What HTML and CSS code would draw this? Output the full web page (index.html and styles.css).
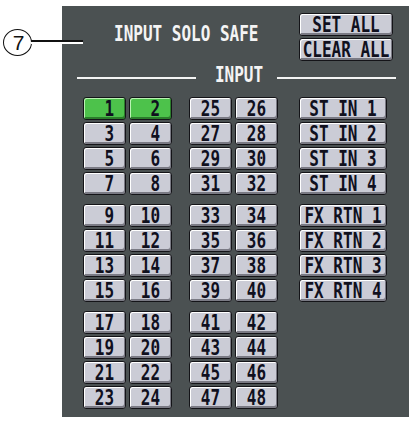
FILE: index.html
```html
<!DOCTYPE html>
<html lang="en">
<head>
<meta charset="utf-8">
<title>Input Solo Safe</title>
<link rel="stylesheet" href="styles.css">
</head>
<body>
<div class="page">
  <div class="callout"><span class="callout-num">7</span></div>
  <div class="leader"></div>

  <section class="panel">
    <header class="head">
      <h1 class="title"><span class="lcd">INPUT SOLO SAFE</span></h1>
      <div class="actions">
        <button type="button" class="btn"><span class="lcd">SET ALL</span></button>
        <button type="button" class="btn"><span class="lcd">CLEAR ALL</span></button>
      </div>
    </header>

    <div class="divider">
      <span class="rule"></span>
      <span class="lcd divider-label">INPUT</span>
      <span class="rule"></span>
    </div>

    <div class="matrix">
      <div class="bank">
        <div class="group">
          <button type="button" class="btn on"><span class="lcd num">1</span></button>
          <button type="button" class="btn on"><span class="lcd num">2</span></button>
          <button type="button" class="btn"><span class="lcd num">3</span></button>
          <button type="button" class="btn"><span class="lcd num">4</span></button>
          <button type="button" class="btn"><span class="lcd num">5</span></button>
          <button type="button" class="btn"><span class="lcd num">6</span></button>
          <button type="button" class="btn"><span class="lcd num">7</span></button>
          <button type="button" class="btn"><span class="lcd num">8</span></button>
        </div>
        <div class="group">
          <button type="button" class="btn"><span class="lcd num">9</span></button>
          <button type="button" class="btn"><span class="lcd num">10</span></button>
          <button type="button" class="btn"><span class="lcd num">11</span></button>
          <button type="button" class="btn"><span class="lcd num">12</span></button>
          <button type="button" class="btn"><span class="lcd num">13</span></button>
          <button type="button" class="btn"><span class="lcd num">14</span></button>
          <button type="button" class="btn"><span class="lcd num">15</span></button>
          <button type="button" class="btn"><span class="lcd num">16</span></button>
        </div>
        <div class="group">
          <button type="button" class="btn"><span class="lcd num">17</span></button>
          <button type="button" class="btn"><span class="lcd num">18</span></button>
          <button type="button" class="btn"><span class="lcd num">19</span></button>
          <button type="button" class="btn"><span class="lcd num">20</span></button>
          <button type="button" class="btn"><span class="lcd num">21</span></button>
          <button type="button" class="btn"><span class="lcd num">22</span></button>
          <button type="button" class="btn"><span class="lcd num">23</span></button>
          <button type="button" class="btn"><span class="lcd num">24</span></button>
        </div>
      </div>

      <div class="bank">
        <div class="group">
          <button type="button" class="btn"><span class="lcd num">25</span></button>
          <button type="button" class="btn"><span class="lcd num">26</span></button>
          <button type="button" class="btn"><span class="lcd num">27</span></button>
          <button type="button" class="btn"><span class="lcd num">28</span></button>
          <button type="button" class="btn"><span class="lcd num">29</span></button>
          <button type="button" class="btn"><span class="lcd num">30</span></button>
          <button type="button" class="btn"><span class="lcd num">31</span></button>
          <button type="button" class="btn"><span class="lcd num">32</span></button>
        </div>
        <div class="group">
          <button type="button" class="btn"><span class="lcd num">33</span></button>
          <button type="button" class="btn"><span class="lcd num">34</span></button>
          <button type="button" class="btn"><span class="lcd num">35</span></button>
          <button type="button" class="btn"><span class="lcd num">36</span></button>
          <button type="button" class="btn"><span class="lcd num">37</span></button>
          <button type="button" class="btn"><span class="lcd num">38</span></button>
          <button type="button" class="btn"><span class="lcd num">39</span></button>
          <button type="button" class="btn"><span class="lcd num">40</span></button>
        </div>
        <div class="group">
          <button type="button" class="btn"><span class="lcd num">41</span></button>
          <button type="button" class="btn"><span class="lcd num">42</span></button>
          <button type="button" class="btn"><span class="lcd num">43</span></button>
          <button type="button" class="btn"><span class="lcd num">44</span></button>
          <button type="button" class="btn"><span class="lcd num">45</span></button>
          <button type="button" class="btn"><span class="lcd num">46</span></button>
          <button type="button" class="btn"><span class="lcd num">47</span></button>
          <button type="button" class="btn"><span class="lcd num">48</span></button>
        </div>
      </div>

      <div class="bank bank-named">
        <div class="group group-single">
          <button type="button" class="btn"><span class="lcd">ST IN 1</span></button>
          <button type="button" class="btn"><span class="lcd">ST IN 2</span></button>
          <button type="button" class="btn"><span class="lcd">ST IN 3</span></button>
          <button type="button" class="btn"><span class="lcd">ST IN 4</span></button>
        </div>
        <div class="group group-single">
          <button type="button" class="btn"><span class="lcd">FX RTN 1</span></button>
          <button type="button" class="btn"><span class="lcd">FX RTN 2</span></button>
          <button type="button" class="btn"><span class="lcd">FX RTN 3</span></button>
          <button type="button" class="btn"><span class="lcd">FX RTN 4</span></button>
        </div>
      </div>
    </div>
  </section>
</div>
</body>
</html>
```

FILE: styles.css
```css
html, body {
  margin: 0;
  padding: 0;
  background: #ffffff;
}

.page {
  position: relative;
  width: 412px;
  height: 421px;
  overflow: hidden;
}

/* circled reference number with its leader line */
.callout {
  position: absolute;
  left: 3px;
  top: 29px;
  width: 29px;
  height: 27px;
  box-sizing: border-box;
  border: 1.2px solid #111111;
  border-radius: 50%;
  background: #ffffff;
  display: flex;
  align-items: center;
  justify-content: center;
  z-index: 2;
}

.callout-num {
  font-family: "Liberation Sans", Arial, sans-serif;
  font-size: 21px;
  line-height: 21px;
  color: #111111;
  margin-left: 2px;
}

.leader {
  position: absolute;
  left: 31px;
  top: 40px;
  width: 52px;
  height: 0;
  border-top: 2px solid #111111;
  border-bottom: 2px solid #ffffff;
  z-index: 2;
}

/* console panel */
.panel {
  box-sizing: border-box;
  width: 347px;
  height: 411px;
  margin: 6px 0 0 62px;
  padding: 7px 13px 0 15px;
  background: #4b5152;
}

/* display lettering: tall, fixed-cell glyphs */
.lcd {
  display: inline-block;
  font-family: "DejaVu Sans Mono", "Liberation Mono", monospace;
  font-weight: bold;
  font-size: 16px;
  line-height: 16px;
  white-space: pre;
  transform: scaleY(1.28);
}

.head {
  display: flex;
  align-items: flex-start;
}

.title {
  margin: 13px 0 0 37px;
  font-size: inherit;
  font-weight: normal;
  color: #f4f4f4;
}

.actions {
  margin-left: auto;
  margin-right: 3px;
  width: 94px;
  display: flex;
  flex-direction: column;
  gap: 2px;
}

.divider {
  display: flex;
  align-items: center;
  margin-top: 7px;
}

.rule {
  flex: 1;
  height: 2px;
  margin-top: 3px;
  background: #f4f4f4;
}

.divider-label {
  color: #f4f4f4;
  padding: 0 14px 0 19px;
}

/* button matrix */
.matrix {
  display: flex;
  gap: 17px;
  margin: 13px 0 0 6px;
}

.bank {
  display: flex;
  flex-direction: column;
  gap: 9px;
}

.bank-named {
  margin-left: 4px;
}

.group {
  display: grid;
  grid-template-columns: 43px 43px;
  grid-auto-rows: 23px;
  column-gap: 3px;
  row-gap: 2px;
}

.group-single {
  grid-template-columns: 88px;
}

.btn {
  box-sizing: border-box;
  height: 23px;
  margin: 0;
  padding: 2px 0 0;
  border: 1px solid #141418;
  border-radius: 3px;
  background: #cbccd6;
  box-shadow: inset 1px 1px 0 #ffffff, inset -1px -2px 0 #7a7a84;
  color: #10101e;
  display: flex;
  align-items: center;
  justify-content: center;
  font: inherit;
  cursor: pointer;
}

.btn.on {
  background: #4dc24b;
  box-shadow: inset 1px 1px 0 #b9f2b2, inset -1px -2px 0 #2b7d2b;
}

.num {
  width: 2ch;
  text-align: right;
}
```
